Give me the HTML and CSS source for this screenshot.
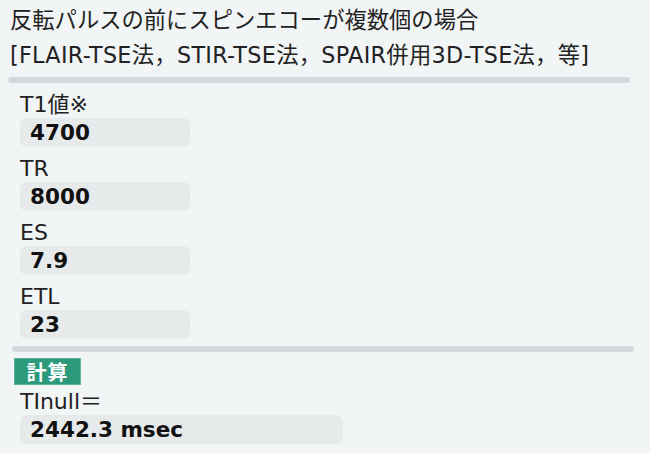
FILE: index.html
```html
<!DOCTYPE html>
<html lang="ja">
<head>
  <meta charset="UTF-8" />
  <meta name="viewport" content="width=device-width, initial-scale=1" />
  <title>TInull 計算</title>
  <link rel="stylesheet" href="styles.css">
</head>
<body>
  <div class="calc">
    <div class="calc-title">
      <div>反転パルスの前にスピンエコーが複数個の場合</div>
      <div class="calc-sub">[FLAIR-TSE法，STIR-TSE法，SPAIR併用3D-TSE法，等]</div>
    </div>
    <div class="rule"></div>

    <div class="field">
      <div class="field-label">T1値※</div>
      <div class="field-value">4700</div>
    </div>
    <div class="field">
      <div class="field-label">TR</div>
      <div class="field-value">8000</div>
    </div>
    <div class="field">
      <div class="field-label">ES</div>
      <div class="field-value">7.9</div>
    </div>
    <div class="field">
      <div class="field-label">ETL</div>
      <div class="field-value">23</div>
    </div>

    <div class="rule rule-bottom"></div>
    <button class="calc-btn">計算</button>

    <div class="field result">
      <div class="field-label">TInull＝</div>
      <div class="field-value">2442.3 msec</div>
    </div>
  </div>
</body>
</html>
```

FILE: styles.css
```css
* {
  box-sizing: border-box;
  margin: 0;
  padding: 0;
}

body {
  font-family: 'DejaVu Sans', 'Noto Sans CJK JP', sans-serif;
  background: #f2f5f6;
  color: #1a1a1a;
  width: 650px;
  height: 453px;
  overflow: hidden;
}

.calc {
  padding: 3px 0 0 0;
}

.calc-title {
  font-size: 22.3px;
  line-height: 35px;
  padding-left: 10px;
  color: #222;
}

.calc-sub {
  letter-spacing: 0.3px;
}

.rule {
  height: 6px;
  margin: 4px 0 0 8px;
  width: 622px;
  background: #d2d8db;
  border-radius: 3px;
}

.rule-bottom {
  margin: 7px 0 0 12px;
}

.field {
  padding-left: 20px;
}

.field-label {
  font-size: 22px;
  line-height: 26px;
  padding-top: 9px;
  color: #222;
}

.field-value {
  width: 170px;
  height: 29px;
  line-height: 29px;
  padding-left: 10px;
  font-size: 21.5px;
  font-weight: 700;
  background: #e7eaeb;
  border-radius: 7px;
  color: #111;
}

.calc-btn {
  display: block;
  margin: 6px 0 0 14px;
  width: 67px;
  height: 27px;
  background: #2a9a7b;
  border: 1px solid #5db39b;
  color: #fff;
  font-family: 'Noto Sans CJK JP', sans-serif;
  font-size: 20px;
  font-weight: 700;
  line-height: 24px;
  letter-spacing: 1px;
  cursor: pointer;
}

.result .field-label {
  padding-top: 4px;
}

.result .field-value {
  width: 323px;
}
```
